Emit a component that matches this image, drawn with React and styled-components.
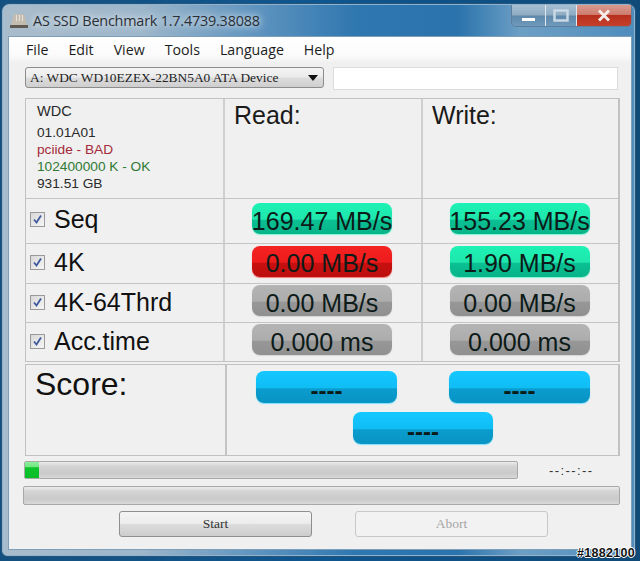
import React from 'react';
import styled, { createGlobalStyle } from 'styled-components';

const GlobalStyle = createGlobalStyle`
  html, body { margin: 0; padding: 0; background: #0f4a7c; }
  * { box-sizing: border-box; }
`;

const Page = styled.div`
  position: relative;
  width: 640px;
  height: 561px;
  overflow: hidden;
  padding: 4px 5px 5px 2px;
  background: linear-gradient(90deg, #14507f 0%, #0f568f 50%, #0f4a78 100%);
`;

const Window = styled.div`
  height: 552px;
  display: flex;
  flex-direction: column;
  padding: 0 2px 5px 5px;
  border: 1px solid #8fb3cf;
  border-radius: 7px 7px 5px 5px;
  background:
    linear-gradient(90deg, #a9bccb 0%, #9db6ca 22%, #5f94bf 40%, #2f77b0 56%, #2a73ad 72%, #6d9fc4 82%, #4f8dbd 100%);
  box-shadow: 0 0 0 1px #23557d;
`;

const TitleBar = styled.div`
  position: relative;
  flex: none;
  height: 31px;
  display: flex;
  align-items: center;
  gap: 5px;
  padding: 0 0 0 2px;
`;

const TitleText = styled.span`
  font: 14.4px "Open Sans", sans-serif;
  color: #2a2f36;
  letter-spacing: -0.2px;
  text-shadow: 0 0 6px #dbe6ee, 0 0 10px #dbe6ee;
`;

const Controls = styled.div`
  position: absolute;
  top: 0;
  right: 0;
  display: flex;
  height: 22px;
  border: 1px solid #5d7f9c;
  border-top: none;
  border-radius: 0 0 5px 5px;
  overflow: hidden;
`;

const ControlButton = styled.div`
  width: ${(p) => p.$w}px;
  display: flex;
  align-items: center;
  justify-content: center;
  border-left: ${(p) => (p.$first ? 'none' : '1px solid #dfe8ef')};
  background: ${(p) =>
    p.$close
      ? 'linear-gradient(180deg, #d99a8f 0%, #cf7d6f 45%, #b8301d 50%, #c4402c 100%)'
      : 'linear-gradient(180deg, #a8bfd2 0%, #8eabc3 48%, #5f88aa 52%, #6f9abb 100%)'};
`;

const Client = styled.div`
  flex: 1;
  display: flex;
  flex-direction: column;
  background: #f0f0f0;
  border: 1px solid #7d9fba;
`;

const MenuBar = styled.div`
  flex: none;
  height: 25px;
  display: flex;
  align-items: center;
  gap: 20px;
  padding: 0 0 0 17px;
  background: linear-gradient(180deg, #ffffff 0%, #fbfbfb 70%, #f2f2f2 100%);
  font: 14.2px "Open Sans", sans-serif;
  color: #1c1c1c;
`;

const DriveRow = styled.div`
  flex: none;
  display: flex;
  gap: 9px;
  padding: 5px 13px 0 16px;
  height: 36px;
`;

const DriveSelect = styled.div`
  width: 299px;
  height: 21px;
  display: flex;
  align-items: center;
  justify-content: space-between;
  padding: 0 5px 0 4px;
  border: 1px solid #8c8c8c;
  border-radius: 3px;
  background: linear-gradient(180deg, #f4f4f4 0%, #ebebeb 48%, #dcdcdc 52%, #cfcfcf 100%);
  font: 13.4px "Liberation Serif", serif;
  color: #222;
`;

const DriveInput = styled.div`
  flex: 1;
  height: 23px;
  background: #fff;
  border: 1px solid #dcdcdc;
`;

const ResultsGrid = styled.div`
  flex: none;
  width: 595px;
  margin-left: 16px;
  display: grid;
  grid-template-columns: 197px 198px 197px;
  grid-template-rows: 99px 45px 40px 39px 39px;
  border: 1px solid #c2c2c2;
  border-right-width: 2px;
`;

const Cell = styled.div`
  display: flex;
  align-items: center;
  justify-content: ${(p) => (p.$label ? 'flex-start' : 'center')};
  gap: 9px;
  padding: ${(p) => (p.$label ? `0 0 ${p.$lift || 0}px 4px` : '0 2px 5px 0')};
  border-top: ${(p) => (p.$head ? 'none' : '1px solid #c4c4c4')};
  border-left: ${(p) => (p.$first ? 'none' : '2px solid #cfcfcf')};
`;

const InfoCell = styled(Cell)`
  flex-direction: column;
  align-items: flex-start;
  justify-content: flex-start;
  gap: 0;
  padding: 4px 0 0 11px;
`;

const InfoLine = styled.div`
  font: ${(p) => (p.$big ? 14.5 : 13.7)}px/17px "Liberation Sans", sans-serif;
  color: ${(p) => p.$color || '#2a2a2a'};
  height: ${(p) => (p.$big ? 21 : 17)}px;
`;

const HeadCell = styled(Cell)`
  align-items: flex-start;
  justify-content: flex-start;
  padding: 2px 0 0 9px;
  font: 25px "Liberation Sans", sans-serif;
  color: #1a1a1a;
`;

const CheckBox = styled.span`
  flex: none;
  width: 15px;
  height: 15px;
  display: flex;
  align-items: center;
  justify-content: center;
  border: 1px solid #9a9a9a;
  background: linear-gradient(135deg, #d8d8d8 0%, #f6f6f6 100%);
`;

const RowLabel = styled.span`
  font: 25px "Liberation Sans", sans-serif;
  color: #111;
`;

const tones = {
  green: ['#1df2b4', '#1fe6ac', '#0bc094', '#06b488', '#7df5d2'],
  red: ['#f52222', '#ee1c1c', '#c81010', '#bd0d0d', '#f47a7a'],
  gray: ['#b4b4b4', '#adadad', '#979797', '#909090', '#d6d6d6'],
  blue: ['#14c8ff', '#10bdf5', '#0a9ccd', '#0894c4', '#7ee0ff'],
};

const Pill = styled.div`
  width: ${(p) => p.$w || 140}px;
  height: ${(p) => p.$h || 31}px;
  flex: none;
  display: flex;
  align-items: center;
  justify-content: center;
  padding-top: 4px;
  border-radius: 8px;
  font: 25px/24px "Liberation Sans", sans-serif;
  color: #0c1a18;
  white-space: nowrap;
  background: ${(p) => {
    const t = tones[p.$tone];
    return `linear-gradient(180deg, ${t[0]} 0%, ${t[1]} 52%, ${t[2]} 56%, ${t[3]} 100%)`;
  }};
  box-shadow: 0 1px 1px ${(p) => tones[p.$tone][4]};
`;

const ScorePill = styled(Pill)`
  padding-top: 8px;
  font-size: 24px;
  font-weight: bold;
`;

const ScoreGrid = styled.div`
  flex: none;
  width: 595px;
  height: 92px;
  margin: 2px 0 0 16px;
  display: grid;
  grid-template-columns: 199px 1fr;
  border: 1px solid #c2c2c2;
  border-right-width: 2px;
`;

const ScoreLabel = styled.div`
  padding: 1px 0 0 9px;
  font: 32px "Liberation Sans", sans-serif;
  color: #111;
`;

const ScorePills = styled.div`
  display: grid;
  grid-template-columns: 141px 141px;
  column-gap: 52px;
  row-gap: 9px;
  justify-content: start;
  align-content: start;
  padding: 6px 0 0 29px;
  border-left: 2px solid #c4c4c4;
`;

const TotalPill = styled(ScorePill)`
  grid-column: 1 / 3;
  justify-self: center;
`;

const ProgressRow = styled.div`
  flex: none;
  display: flex;
  align-items: center;
  gap: 31px;
  margin: 5px 0 0 15px;
  height: 18px;
`;

const Track = styled.div`
  width: ${(p) => p.$w}px;
  height: ${(p) => p.$h}px;
  flex: none;
  border: 1px solid #a8a8a8;
  border-radius: 2px;
  background: linear-gradient(180deg, #ececec 0%, #d4d4d4 25%, #cacaca 70%, #d8d8d8 100%);
`;

const Fill = styled.div`
  height: 100%;
  background: linear-gradient(180deg, #8cf09a 0%, #72e884 28%, #0cc42c 36%, #09bd28 100%);
`;

const TimeText = styled.span`
  font: 13px "Liberation Sans", sans-serif;
  letter-spacing: 1.4px;
  color: #333;
`;

const StatusBar = styled(Track)`
  margin: 7px 0 0 14px;
`;

const ButtonRow = styled.div`
  flex: none;
  display: flex;
  gap: 43px;
  margin: 6px 0 0 110px;
`;

const ActionButton = styled.div`
  width: 193px;
  height: 26px;
  display: flex;
  align-items: center;
  justify-content: center;
  border-radius: 3px;
  border: 1px solid ${(p) => (p.$disabled ? '#c8c8c8' : '#8e8e8e')};
  background: ${(p) =>
    p.$disabled
      ? '#f2f2f2'
      : 'linear-gradient(180deg, #f4f4f4 0%, #ececec 48%, #dcdcdc 52%, #cdcdcd 100%)'};
  font: 13.5px "Liberation Serif", serif;
  color: ${(p) => (p.$disabled ? '#a6a6a6' : '#333')};
`;

const Watermark = styled.div`
  position: absolute;
  right: 5px;
  bottom: 1px;
  font: bold 12.5px "Liberation Sans", sans-serif;
  letter-spacing: 0.3px;
  color: #111;
  text-shadow: 1px 0 0 #fff, -1px 0 0 #fff, 0 1px 0 #fff, 0 -1px 0 #fff;
`;

const rows = [
  { name: 'Seq', lift: 4, read: ['169.47 MB/s', 'green'], write: ['155.23 MB/s', 'green'] },
  { name: '4K', lift: 3, read: ['0.00 MB/s', 'red'], write: ['1.90 MB/s', 'green'] },
  { name: '4K-64Thrd', lift: 2, read: ['0.00 MB/s', 'gray'], write: ['0.00 MB/s', 'gray'] },
  { name: 'Acc.time', lift: 2, read: ['0.000 ms', 'gray'], write: ['0.000 ms', 'gray'] },
];

function DriveIcon() {
  return (
    <svg width="18" height="16" viewBox="0 0 18 16">
      <path d="M1 12L3.5 3Q4 1 6 1h6q2 0 2.5 2L17 12z" fill="#c4bcae" />
      <path d="M6 2h1v6H6zM9 2h1v6H9zM12 2h1v6h-1z" fill="#e6e1d8" />
      <path d="M0 12h18v3H0z" fill="#5f5a52" />
    </svg>
  );
}

function Check() {
  return (
    <svg width="11" height="11" viewBox="0 0 11 11">
      <path d="M2 5.5l2.5 3L9 1.5" fill="none" stroke="#3d5a9c" strokeWidth="1.8" />
    </svg>
  );
}

export default function App() {
  return (
    <Page>
      <GlobalStyle />
      <Window>
        <TitleBar>
          <DriveIcon />
          <TitleText>AS SSD Benchmark 1.7.4739.38088</TitleText>
          <Controls>
            <ControlButton $w={33} $first>
              <svg width="15" height="12" viewBox="0 0 15 12">
                <rect x="1" y="8" width="13" height="3" fill="#fff" />
              </svg>
            </ControlButton>
            <ControlButton $w={31}>
              <svg width="16" height="13" viewBox="0 0 16 13">
                <rect x="1.5" y="1.5" width="13" height="10" fill="none" stroke="#c9d9e6" strokeWidth="2.5" />
              </svg>
            </ControlButton>
            <ControlButton $w={55} $close>
              <svg width="14" height="13" viewBox="0 0 14 13">
                <path d="M2 1.5l10 10M12 1.5l-10 10" stroke="#f4ece8" strokeWidth="3" />
              </svg>
            </ControlButton>
          </Controls>
        </TitleBar>
        <Client>
          <MenuBar>
            <span>File</span>
            <span>Edit</span>
            <span>View</span>
            <span>Tools</span>
            <span>Language</span>
            <span>Help</span>
          </MenuBar>
          <DriveRow>
            <DriveSelect>
              <span>A: WDC WD10EZEX-22BN5A0 ATA Device</span>
              <svg width="10" height="6" viewBox="0 0 10 6">
                <path d="M0 0h10L5 6z" fill="#111" />
              </svg>
            </DriveSelect>
            <DriveInput />
          </DriveRow>
          <ResultsGrid>
            <InfoCell $head $first>
              <InfoLine $big>WDC</InfoLine>
              <InfoLine>01.01A01</InfoLine>
              <InfoLine $color="#a52a3a">pciide - BAD</InfoLine>
              <InfoLine $color="#2f7a35">102400000 K - OK</InfoLine>
              <InfoLine>931.51 GB</InfoLine>
            </InfoCell>
            <HeadCell $head>Read:</HeadCell>
            <HeadCell $head>Write:</HeadCell>
            {rows.map((row) => (
              <React.Fragment key={row.name}>
                <Cell $label $first $lift={row.lift}>
                  <CheckBox>
                    <Check />
                  </CheckBox>
                  <RowLabel>{row.name}</RowLabel>
                </Cell>
                <Cell>
                  <Pill $tone={row.read[1]}>{row.read[0]}</Pill>
                </Cell>
                <Cell>
                  <Pill $tone={row.write[1]}>{row.write[0]}</Pill>
                </Cell>
              </React.Fragment>
            ))}
          </ResultsGrid>
          <ScoreGrid>
            <ScoreLabel>Score:</ScoreLabel>
            <ScorePills>
              <ScorePill $tone="blue" $w={141} $h={32}>----</ScorePill>
              <ScorePill $tone="blue" $w={141} $h={32}>----</ScorePill>
              <TotalPill $tone="blue" $h={32}>----</TotalPill>
            </ScorePills>
          </ScoreGrid>
          <ProgressRow>
            <Track $w={494} $h={18}>
              <Fill style={{ width: `${(14 / 494) * 100}%` }} />
            </Track>
            <TimeText>--:--:--</TimeText>
          </ProgressRow>
          <StatusBar $w={597} $h={19} />
          <ButtonRow>
            <ActionButton>Start</ActionButton>
            <ActionButton $disabled>Abort</ActionButton>
          </ButtonRow>
        </Client>
      </Window>
      <Watermark>#1882100</Watermark>
    </Page>
  );
}
